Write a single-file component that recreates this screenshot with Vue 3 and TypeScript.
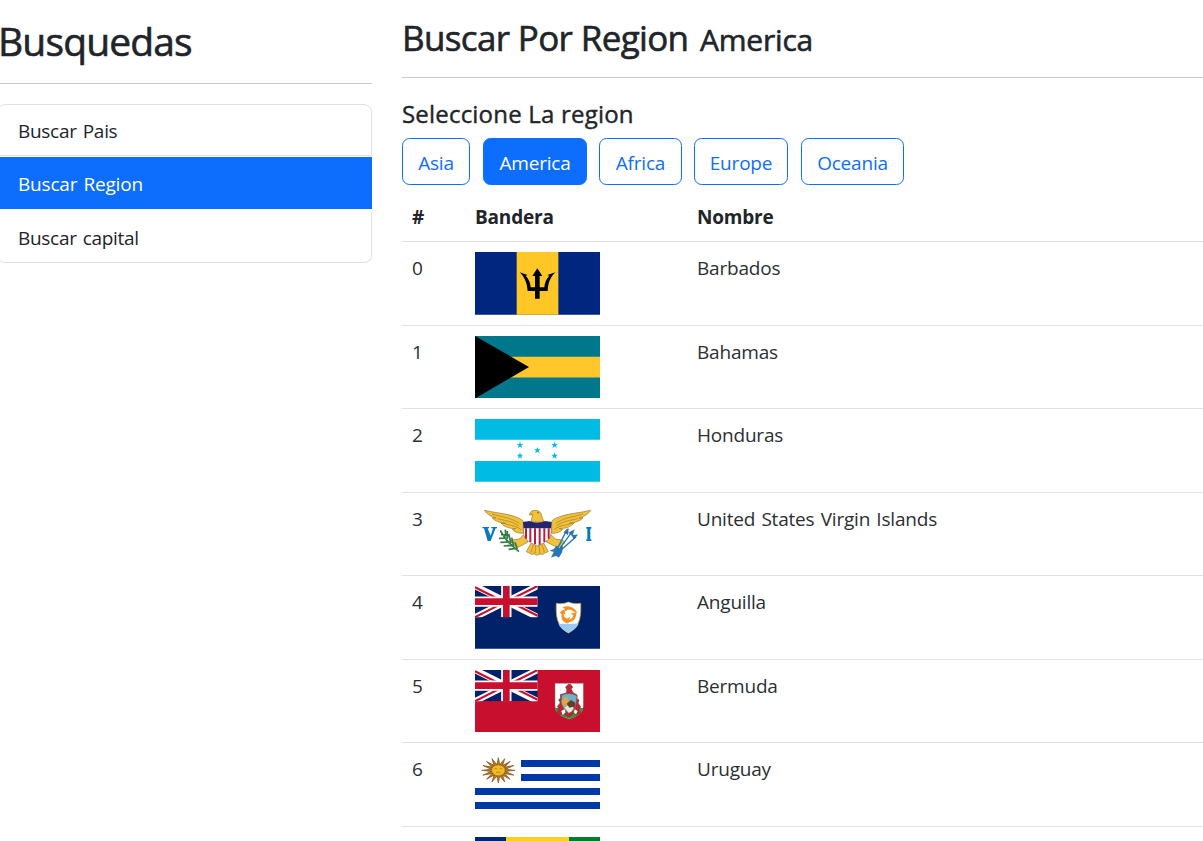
<script setup lang="ts">
import { ref } from 'vue'

type FlagCode = 'bb' | 'bs' | 'hn' | 'vi' | 'ai' | 'bm' | 'uy' | 'vc'

interface Country {
  name: string
  flag: FlagCode
}

const links: string[] = ['Buscar Pais', 'Buscar Region', 'Buscar capital']
const activeLink = ref<string>('Buscar Region')

const regions: string[] = ['Asia', 'America', 'Africa', 'Europe', 'Oceania']
const region = ref<string>('America')

const countries: Country[] = [
  { name: 'Barbados', flag: 'bb' },
  { name: 'Bahamas', flag: 'bs' },
  { name: 'Honduras', flag: 'hn' },
  { name: 'United States Virgin Islands', flag: 'vi' },
  { name: 'Anguilla', flag: 'ai' },
  { name: 'Bermuda', flag: 'bm' },
  { name: 'Uruguay', flag: 'uy' },
  { name: '', flag: 'vc' },
]

const stars: [number, number][] = [[165, 99], [269, 99], [217, 115], [165, 131], [269, 131]]
const rays: number[] = Array.from({ length: 16 }, (_, i) => i * 22.5)
</script>

<template>
  <div class="page">
    <aside class="sidebar">
      <h1 class="side-title">Busquedas</h1>
      <hr />
      <ul class="menu">
        <li
          v-for="link in links"
          :key="link"
          :class="{ active: link === activeLink }"
          @click="activeLink = link"
        >{{ link }}</li>
      </ul>
    </aside>

    <main class="content">
      <h2 class="title"><span class="lead">Buscar Por Region</span><span class="current">{{ region }}</span></h2>
      <hr />
      <h4 class="subtitle">Seleccione La region</h4>
      <div class="buttons">
        <button
          v-for="r in regions"
          :key="r"
          type="button"
          :class="[r.toLowerCase(), { active: r === region }]"
          @click="region = r"
        >{{ r }}</button>
      </div>

      <div class="table">
        <div class="row head"><span>#</span><span class="flag">Bandera</span><span>Nombre</span></div>
        <div v-for="(c, i) in countries" :key="c.flag" class="row">
          <span class="num">{{ c.name ? i : '' }}</span>
          <span class="flag">
            <svg v-if="c.flag === 'bb'" viewBox="30 21 375 187.5">
              <path fill="#00267f" d="M30 21h375v188H30z" />
              <path fill="#ffc726" d="M155 21h125v188H155z" />
              <path d="M217 70l15 23h-8v34h14c1-14 6-26 15-35l-6-2 24-8c-16 16-22 33-23 56h-24v23h-14v-23h-22c-2-23-8-40-24-56l24 8-6 2c9 9 14 21 15 35h13V93h-8z" />
            </svg>

            <svg v-else-if="c.flag === 'bs'" viewBox="30 18 375 187.5">
              <path fill="#00778b" d="M30 18h375v188H30z" />
              <path fill="#ffc72c" d="M30 80.500h375v62H30z" />
              <path d="M30 18l162 93L30 205.500z" />
            </svg>

            <svg v-else-if="c.flag === 'hn'" viewBox="30 21 375 187.5">
              <path fill="#fff" d="M30 21h375v188H30z" />
              <path fill="#00bce4" d="M30 21h375v62.500H30zM30 147h375v62H30z" />
              <path
                v-for="([x, y], s) in stars"
                :key="s"
                fill="#00bce4"
                :transform="`translate(${x} ${y})`"
                d="M0-10l2.500 7H10L4 1.500 6.500 9 0 4.500-6.500 9-4 1.500-10-3h7.500z"
              />
            </svg>

            <svg v-else-if="c.flag === 'vi'" viewBox="15 18 375 187.5">
              <g fill="#f0c13b" stroke="#8b6a2b" stroke-width="1.800" stroke-linejoin="round">
                <path d="M43 40c35 8 65 9 93 19 13 5 21 8 24 15v35c-16 0-26-3-33-12l10-2c-18 0-34-5-44-17l14 1C88 77 74 72 66 62l12 1C62 59 49 50 43 40z" />
                <path d="M362 40c-35 8-65 9-93 19-13 5-21 8-24 15v35c16 0 26-3 33-12l-10-2c18 0 34-5 44-17l-14 1c19-2 33-7 41-17l-12 1c16-4 29-13 35-23z" />
                <path d="M183 75l5-22-10 1c1-9 8-14 17-14 12 0 18 6 19 14l8 22z" />
                <path d="M162 112l-14 14-22 3-5 8 14 1-6 8 17 4 28-15zM242 112l14 14 22 3 7 9-13 1 4 9-16 2-31-15z" />
                <path d="M186 133l-17 31 10 5 5 3 9-1 8 4 9-4 10 1 4-4 11-4-17-31z" />
              </g>
              <path fill="none" stroke="#a77b25" stroke-width="2" d="M66 51c28 9 55 10 82 28M82 65c23 6 45 7 64 22M106 81c16 5 31 4 47 17M339 51c-28 9-55 10-82 28M323 65c-23 6-45 7-64 22M299 81c-16 5-31 4-47 17M190 143l-7 23M197 144l-2 25M207 144l2 26M216 143l7 22" />
              <path fill="#fff" stroke="#6d5360" stroke-width="1.500" d="M161 78h82v30c0 18-15 27-41 39-26-12-41-21-41-39z" />
              <path fill="none" stroke="#b22044" stroke-width="6" d="M168 94v31M181 94v41M195 94v48M209 94v49M223 94v41M236 94v31" />
              <path fill="#24256b" d="M159 75l20-3q23 10 46 0l20 3-2 19h-82z" />
              <path fill="#0a78bf" d="M37 90h20v4h-4l9 22 7-22h-5v-4h17v4h-4l-15 38h-9L42 94h-5zM349 90h15v5h-3v32h3v5h-15v-5h3V95h-3z" />
              <path fill="none" stroke="#317b42" stroke-width="5" d="M91 100q14 31 56 64M93 112l14 3-1-17M87 124l25-1 0-21M91 136l31-1-6-24M101 147l29-3-5-22M116 157l25-3-6-18" />
              <path fill="none" stroke="#2478b6" stroke-width="4" d="M291 98l-34 67M307 103l-44 60M318 119l-55 49" />
              <path fill="#2478b6" stroke="#315771" stroke-width="1" d="M295 94l-14 12 13 7zM313 98l-17 9 11 9zM323 113l-18 2 7 12zM251 157l9-11 8 8 10-6-2 17-9 16-9-5-14 5 8-17-12-3z" />
              <circle cx="204" cy="47" r="1.800" fill="#463519" />
              <path fill="#d19427" d="M178 54l9-7 2 7z" />
            </svg>

            <svg v-else-if="c.flag === 'ai' || c.flag === 'bm'" viewBox="15 18 375 187.5">
              <path :fill="c.flag === 'ai' ? '#012169' : '#c8102e'" d="M15 18h375v188H15z" />
              <svg x="15" y="18" width="188" height="93.5" viewBox="0 0 188 94" preserveAspectRatio="none">
                <path fill="#012169" d="M0 0h188v94H0z" />
                <path stroke="#fff" stroke-width="19" d="M0 0l188 94M188 0L0 94" />
                <path stroke="#c8102e" stroke-width="6.500" d="M0 4l85 43M103 43L188 0M188 90l-85-43M85 51L0 94" />
                <path stroke="#fff" stroke-width="31" d="M94 0v94M0 47h188" />
                <path stroke="#c8102e" stroke-width="20" d="M94 0v94M0 47h188" />
              </svg>
              <g v-if="c.flag === 'ai'">
                <path fill="#fff" stroke="#c9a74d" stroke-width="2.500" d="M259 70c13 2 25 1 36-4 12 5 24 6 37 4 1 37 0 69-37 89-36-20-37-52-36-89z" />
                <path fill="#9bcaf3" d="M265 131h61c-5 12-15 20-31 27-15-7-25-15-30-27z" />
                <g fill="#f19125">
                  <path d="M277 82c12-6 29-4 39 8l7 9-11-3c-5-6-14-8-21-5l-9 5 2-10z" />
                  <path d="M319 97c1 16-7 26-18 29l-14 4 7-11c9 1 15-6 16-14l-8-4z" />
                  <path d="M294 130c-15-2-22-14-19-28l-6-3 11-11 7 13-6 1c0 9 6 14 13 13l7-6z" />
                </g>
              </g>
              <g v-else>
                <path fill="#fff" stroke="#777b68" stroke-width="1.500" d="M255 58h85v65c0 24-15 32-42 42-29-10-43-18-43-42z" />
                <path fill="#368b35" d="M256 132h83c-4 16-18 25-41 32-25-7-38-16-42-32z" />
                <path fill="#c8202f" stroke="#6e3340" stroke-width="2" d="M289 87l2-10-4-8 8-8 8 1 5 8-5 5 6 11 12 7v12l6 3-3 9 8 12-7 8 7 9-12 8-7-10-8 9-9 5-9-5-7-9-9 9-11-8 9-9-7-8 9-12-5-9 6-4-1-11z" />
                <path fill="#73afc7" stroke="#626358" stroke-width="2" d="M275 94q21-12 46 1l-3 25-5 16-16 12-15-12-8-19z" />
                <path fill="#d7aa47" d="M274 111l12-13 9 3v24l-16 1z" />
                <path fill="#693c29" d="M290 119l13-11 13 8-2 15-13 4z" />
                <path fill="#eee6d4" d="M284 130l9-5 5 6 13-3-5 14-10 4z" />
                <path fill="#fff" d="M274 141l9-5 4 9-9 8zM311 145l4-9 8 6-5 9z" />
              </g>
            </svg>

            <svg v-else-if="c.flag === 'uy'" viewBox="15 15 375 187.5">
              <path fill="#fff" d="M15 15h375v188H15z" />
              <path fill="#0038a8" d="M153 36h237v21H153zM153 78h237v21H153zM15 120h375v21H15zM15 162h375v21H15z" />
              <g transform="translate(85 67)">
                <g v-for="a in rays" :key="a" :transform="`scale(1.32 1) rotate(${a})`">
                  <path fill="#b9781c" stroke="#704719" stroke-width="1.500" d="M-4-14L0-38 4-14z" />
                </g>
                <ellipse rx="20" ry="16" fill="#efbd21" stroke="#a87420" stroke-width="1.500" />
                <path fill="none" stroke="#a87420" stroke-width="2" d="M-12-5h8M4-5h8M-7 6H7" />
              </g>
            </svg>

            <svg v-else viewBox="15 15 375 187.5">
              <path fill="#002674" d="M15 15h93v188H15z" />
              <path fill="#fcd022" d="M108 15h189v188H108z" />
              <path fill="#007c2e" d="M297 15h93v188h-93z" />
            </svg>
          </span>
          <span class="name">{{ c.name }}</span>
        </div>
      </div>
    </main>
  </div>
</template>

<style>
body {
  margin: 0;
  background: #fff;
}
</style>

<style scoped>
.page {
  display: flex;
  gap: 30px;
  width: 1203px;
  height: 841px;
  overflow: hidden;
  color: #212529;
  font-family: "Segoe UI", "Open Sans", "Noto Sans", sans-serif;
  font-size: 19px;
  line-height: 30px;
  letter-spacing: -0.3px;
  word-spacing: 1.5px;
}

.page * {
  box-sizing: border-box;
}

h1,
h2,
h4 {
  margin: 0;
  font-weight: 500;
  white-space: nowrap;
  word-spacing: 0;
  -webkit-text-stroke: 0.6px #212529;
}

hr {
  height: 1px;
  margin: 0;
  border: 0;
  background: #c8c9ca;
}

.sidebar {
  flex: none;
  width: 375px;
  margin-left: -3px;
}

.side-title {
  height: 83px;
  padding: 16px 0 0 1px;
  font-size: 39px;
  line-height: 50px;
  letter-spacing: -0.85px;
}

.menu {
  display: flex;
  flex-direction: column;
  margin: 20px 0 0;
  padding: 0;
  list-style: none;
}

.menu li {
  height: 52px;
  padding: 11px 20px;
  border: 1px solid #dee2e6;
}

.menu li:first-child {
  border-radius: 8px 8px 0 0;
}

.menu li:last-child {
  height: 51px;
  margin-top: 3px;
  padding-top: 11px;
  border-top: 0;
  border-radius: 0 0 8px 8px;
}

.menu li.active {
  margin-top: 1px;
  border-color: #0d6efd;
  background: #0d6efd;
  color: #fff;
  letter-spacing: -0.2px;
}

.content {
  flex: 1;
  min-width: 0;
}

.title {
  display: flex;
  align-items: baseline;
  height: 77px;
  padding-top: 14px;
  font-size: 35px;
  line-height: 48px;
}

.lead {
  width: 298px;
  letter-spacing: -0.65px;
}

.current {
  font-size: 30px;
  letter-spacing: -0.2px;
}

.subtitle {
  height: 60px;
  padding-top: 21px;
  font-size: 24px;
  letter-spacing: 0.2px;
  -webkit-text-stroke-width: 0.4px;
}

.buttons {
  display: flex;
  height: 47px;
}

.buttons button {
  height: 47px;
  padding: 2px 0 0;
  border: 1px solid #0d6efd;
  border-radius: 7.5px;
  background: #fff;
  color: #0d6efd;
  font: inherit;
  letter-spacing: -0.2px;
}

.buttons .asia { width: 68px; margin-right: 13px; }
.buttons .america { width: 104px; margin-right: 12px; }
.buttons .africa { width: 83px; margin-right: 12px; }
.buttons .europe { width: 94px; margin-right: 13px; }
.buttons .oceania { width: 103px; }

.buttons button.active {
  background: #0d6efd;
  color: #fff;
}

.row {
  display: grid;
  grid-template-columns: 63px 222px 1fr;
  height: 83.5px;
  padding: 10px 0 0 10px;
  border-bottom: 1px solid #dee2e6;
  letter-spacing: -0.2px;
}

.row.head {
  height: 57px;
  padding-top: 17px;
  font-weight: 700;
}

.num,
.name {
  padding-top: 1px;
  color: #2b2f33;
}

.flag > svg {
  display: block;
  width: 125px;
  height: 62.5px;
}
</style>
